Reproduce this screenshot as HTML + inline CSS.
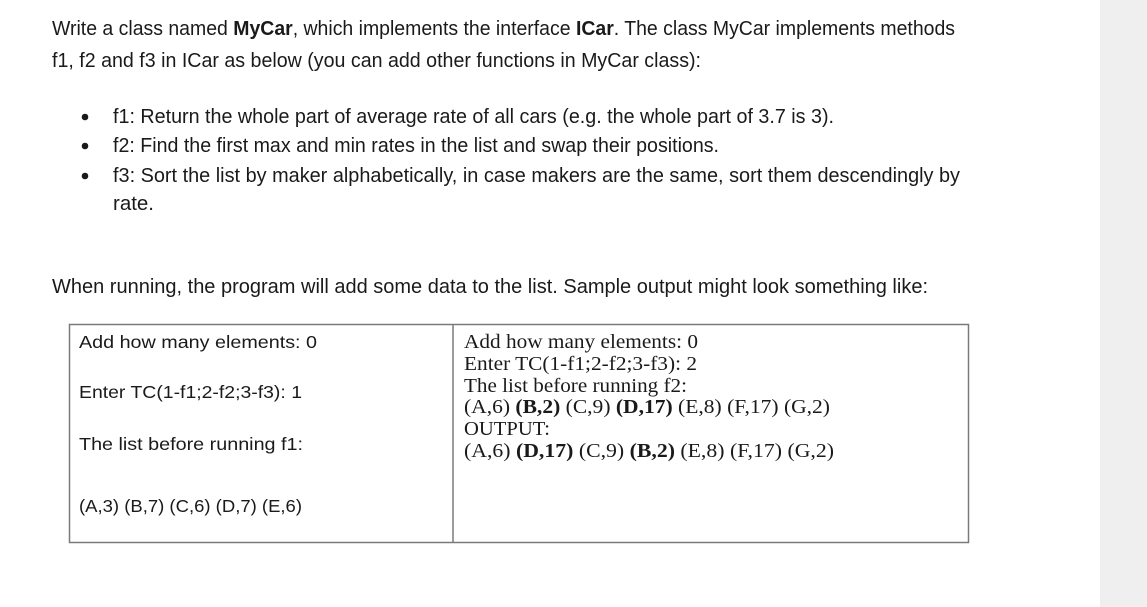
<!DOCTYPE html>
<html><head><meta charset="utf-8"><style>
html,body{margin:0;padding:0;background:#fff;}
svg{display:block;}
.c{font-family:"Liberation Sans",sans-serif;fill:#1a1a1a;}
.t{font-family:"Liberation Serif",serif;fill:#1a1a1a;}
</style></head><body>
<svg width="1147" height="607" viewBox="0 0 1147 607" xmlns="http://www.w3.org/2000/svg">
<rect x="0" y="0" width="1147" height="607" fill="#fff"/>
<rect x="1100" y="0" width="47" height="607" fill="#efefef"/>
<g class="c" font-size="20">
<text x="52" y="35" textLength="903" lengthAdjust="spacingAndGlyphs">Write a class named <tspan font-weight="bold">MyCar</tspan>, which implements the interface <tspan font-weight="bold">ICar</tspan>. The class MyCar implements methods</text>
<text x="52" y="67" textLength="649" lengthAdjust="spacingAndGlyphs">f1, f2 and f3 in ICar as below (you can add other functions in MyCar class):</text>
<circle cx="85" cy="117" r="3.3"/>
<circle cx="85" cy="146" r="3.3"/>
<circle cx="85" cy="176" r="3.3"/>
<text x="113" y="123" textLength="721" lengthAdjust="spacingAndGlyphs">f1: Return the whole part of average rate of all cars (e.g. the whole part of 3.7 is 3).</text>
<text x="113" y="152" textLength="606" lengthAdjust="spacingAndGlyphs">f2: Find the first max and min rates in the list and swap their positions.</text>
<text x="113" y="182" textLength="847" lengthAdjust="spacingAndGlyphs">f3: Sort the list by maker alphabetically, in case makers are the same, sort them descendingly by</text>
<text x="113" y="210" textLength="41" lengthAdjust="spacingAndGlyphs">rate.</text>
<text x="52" y="293" textLength="876" lengthAdjust="spacingAndGlyphs">When running, the program will add  some data to the list. Sample output might look something like:</text>
</g>
<rect x="69.5" y="324.5" width="899" height="218" fill="none" stroke="#7a7a7a" stroke-width="1.5"/>
<line x1="453" y1="325" x2="453" y2="542" stroke="#7a7a7a" stroke-width="1.5"/>
<g class="c" font-size="17.5">
<text x="79" y="348" textLength="238" lengthAdjust="spacingAndGlyphs">Add how many elements: 0</text>
<text x="79" y="398" textLength="223" lengthAdjust="spacingAndGlyphs">Enter TC(1-f1;2-f2;3-f3): 1</text>
<text x="79" y="450" textLength="224" lengthAdjust="spacingAndGlyphs">The list before running f1:</text>
<text x="79" y="512" textLength="223" lengthAdjust="spacingAndGlyphs">(A,3) (B,7) (C,6) (D,7) (E,6)</text>
</g>
<g class="t" font-size="19.5">
<text x="464" y="348" textLength="234" lengthAdjust="spacingAndGlyphs">Add how many elements: 0</text>
<text x="464" y="370" textLength="233" lengthAdjust="spacingAndGlyphs">Enter TC(1-f1;2-f2;3-f3): 2</text>
<text x="464" y="392" textLength="223" lengthAdjust="spacingAndGlyphs">The list before running f2:</text>
<text x="464" y="413" textLength="366" lengthAdjust="spacingAndGlyphs">(A,6) <tspan font-weight="bold">(B,2)</tspan> (C,9) <tspan font-weight="bold">(D,17)</tspan> (E,8) (F,17) (G,2)</text>
<text x="464" y="435" textLength="86" lengthAdjust="spacingAndGlyphs">OUTPUT:</text>
<text x="464" y="457" textLength="370" lengthAdjust="spacingAndGlyphs">(A,6) <tspan font-weight="bold">(D,17)</tspan> (C,9) <tspan font-weight="bold">(B,2)</tspan> (E,8) (F,17) (G,2)</text>
</g>
</svg>
</body></html>
